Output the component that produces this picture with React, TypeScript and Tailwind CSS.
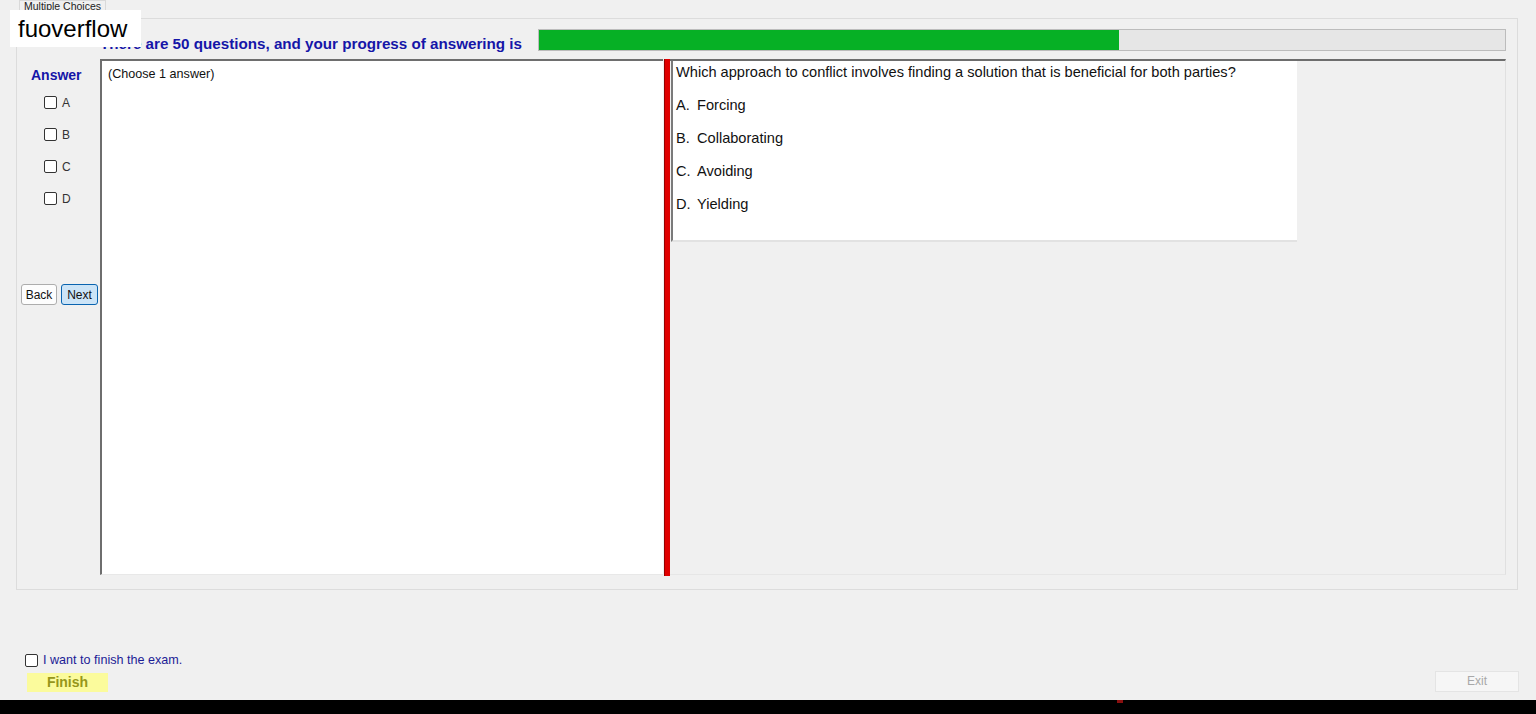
import React from 'react';

const options = [
  { key: 'A', text: 'Forcing' },
  { key: 'B', text: 'Collaborating' },
  { key: 'C', text: 'Avoiding' },
  { key: 'D', text: 'Yielding' },
];

function Box() {
  return <div className="w-[13px] h-[13px] rounded-[2px] border border-[#333333] bg-white shrink-0" />;
}

export default function App() {
  return (
    <div className="w-full h-[714px] bg-[#f0f0f0] flex flex-col overflow-hidden relative font-['Liberation_Sans',Arial,sans-serif]">
      {/* watermark */}
      <div className="absolute left-[10px] top-[10px] w-[131px] h-[37px] bg-white flex items-center pl-[8px] text-[24px] text-black z-10">
        fuoverflow
      </div>

      <div className="h-[700px] flex flex-col">
        {/* tab header */}
        <div className="h-[18px] pl-[19px] flex">
          <div className="w-[87px] h-[14px] border border-b-0 border-[#d9d9d9] bg-[#f0f0f0] text-[10.5px] leading-[10px] text-[#222] pl-[4px] overflow-hidden">
            Multiple Choices
          </div>
        </div>

        {/* tab page */}
        <div className="ml-[16px] w-[1502px] h-[572px] border border-[#dcdcdc] flex flex-col pt-[10px] pr-[11px]">
          <div className="flex items-end h-[22px]">
            <div className="w-[83px] shrink-0" />
            <div className="text-[15.2px] leading-[16px] font-bold text-[#1515a8] whitespace-nowrap -mb-[1px] w-[438px]">
              There are 50 questions, and your progress of answering is
            </div>
            <div className="flex-1 h-[22px] border border-[#bcbcbc] bg-[#e6e6e6]">
              <div className="h-full w-[60%] bg-[#06b025]" />
            </div>
          </div>

          <div className="flex mt-[8px] h-[516px]">
            {/* answer column */}
            <div className="w-[83px] shrink-0 flex flex-col">
              <div className="mt-[8px] pl-[14px] text-[14px] leading-[16px] font-bold text-[#1515a8]">Answer</div>
              <div className="mt-[13px] flex flex-col gap-[19px] pl-[27px]">
                {options.map((o) => (
                  <div key={o.key} className="flex items-center h-[13px] gap-[5px] text-[12px] text-[#333]">
                    <Box />
                    <span>{o.key}</span>
                  </div>
                ))}
              </div>
              <div className="mt-[79px] pl-[4px] flex gap-[4px]">
                <button className="w-[36px] h-[21px] rounded-[3px] border border-[#adadad] bg-[#fdfdfd] text-[12px] text-[#111]">
                  Back
                </button>
                <button className="w-[37px] h-[21px] rounded-[3px] border border-[#0a64b0] bg-[#cce4f7] text-[12px] text-[#111]">
                  Next
                </button>
              </div>
            </div>

            {/* notes box */}
            <div className="w-[563px] h-full bg-white border-t-2 border-l-2 border-t-[#6e6e6e] border-l-[#6e6e6e] border-b border-b-[#e8e8e8] pl-[6px] pt-[4px] text-[12.6px] text-[#111]">
              (Choose 1 answer)
            </div>

            {/* splitter */}
            <div className="w-[6px] h-[517px] bg-[#e00000] border-l border-[#980000] ml-[1px]" />

            {/* question pane */}
            <div className="flex-1 h-full border-t-2 border-[#6d6d6d] border-r border-r-[#e0e0e0] border-b border-b-[#e6e6e6] pl-[1px]">
              <div className="w-[626px] h-[181px] bg-white border-l-2 border-[#7a7a7a] border-b-2 border-b-[#e2e2e2] pl-[3px] flex flex-col gap-[11px] text-[14.6px] text-[#111]">
                <div className="h-[22px] leading-[22px]">
                  Which approach to conflict involves finding a solution that is beneficial for both parties?
                </div>
                {options.map((o) => (
                  <div key={o.key} className="h-[22px] leading-[22px] flex">
                    <span className="w-[21px] shrink-0">{o.key}.</span>
                    <span>{o.text}</span>
                  </div>
                ))}
              </div>
            </div>
          </div>
        </div>

        {/* footer controls */}
        <div className="flex-1 flex flex-col justify-end pb-[8px]">
          <div className="flex items-center h-[13px] gap-[5px] pl-[25px] text-[12.6px] text-[#1c1c96]">
            <Box />
            <span>I want to finish the exam.</span>
          </div>
          <div className="flex items-end justify-between mt-[4px] pl-[27px] pr-[17px]">
            <div className="w-[81px] h-[19px] bg-[#fbfb9c] text-[14px] leading-[19px] font-bold text-[#96961a] text-center">
              Finish
            </div>
            <div className="w-[84px] h-[21px] bg-[#f6f6f6] border border-[#e4e4e4] text-[12px] leading-[19px] text-[#a8a8a8] text-center">
              Exit
            </div>
          </div>
        </div>
      </div>

      <div className="h-[14px] bg-black flex">
        <div className="ml-[1117px] w-[6px] h-[3px] bg-[#8a1010]" />
      </div>
    </div>
  );
}
